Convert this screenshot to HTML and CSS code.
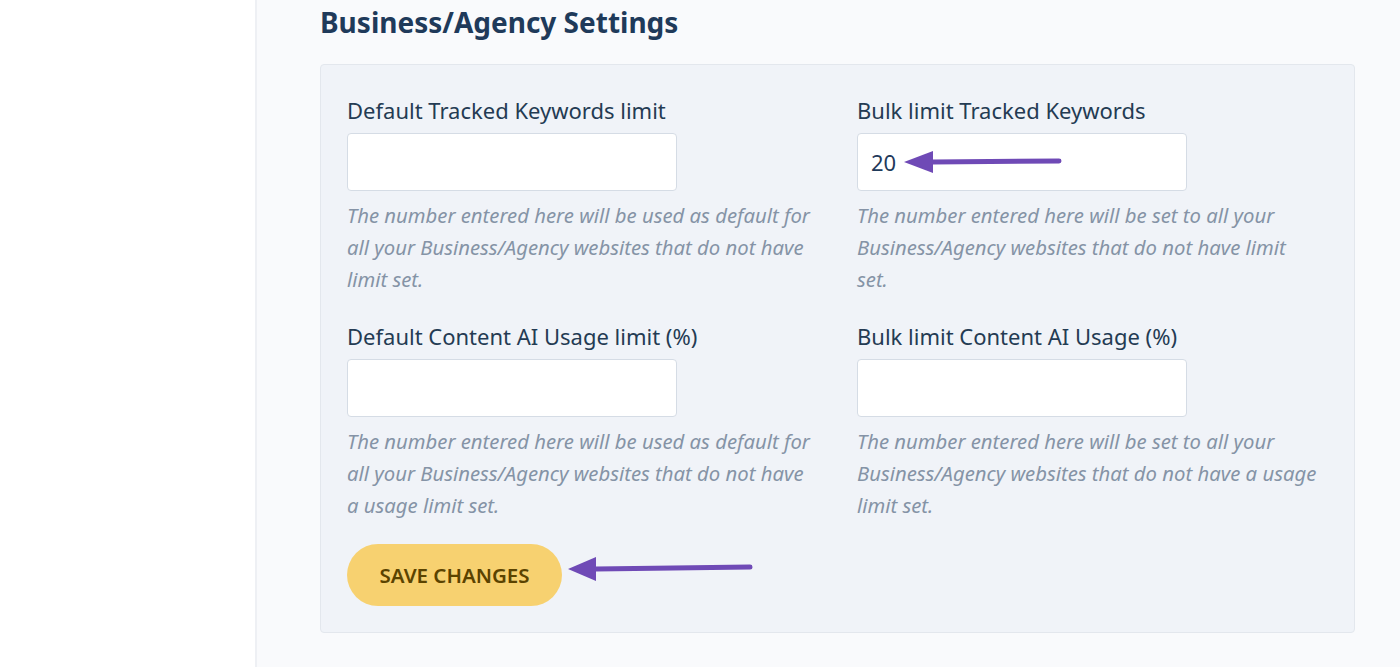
FILE: index.html
```html
<!DOCTYPE html>
<html lang="en">
<head>
  <meta charset="UTF-8" />
  <meta name="viewport" content="width=device-width, initial-scale=1.0" />
  <title>Business/Agency Settings</title>
  <link rel="stylesheet" href="styles.css">
</head>
<body>
  <div class="layout">
    <aside class="sidebar"></aside>

    <main class="content">
      <h2 class="title">Business/Agency Settings</h2>

      <form class="panel" onsubmit="return false">
        <div class="grid">
          <div class="field">
            <label for="defaultKeywords">Default Tracked Keywords limit</label>
            <input type="text" id="defaultKeywords" />
            <p class="help">The number entered here will be used as default for all your Business/Agency websites that do not have limit set.</p>
          </div>

          <div class="field">
            <label for="bulkKeywords">Bulk limit Tracked Keywords</label>
            <div class="input-wrap">
              <input type="text" id="bulkKeywords" value="20" />
              <svg class="arrow arrow-input" width="160" height="26" viewBox="0 0 160 26">
                <path d="M31 12 L157 11" stroke="#6f4ab6" stroke-width="5" stroke-linecap="round" />
                <path d="M2 12 L31 1 L31 23 Z" fill="#6f4ab6" />
              </svg>
            </div>
            <p class="help">The number entered here will be set to all your Business/Agency websites that do not have limit set.</p>
          </div>

          <div class="field">
            <label for="defaultAi">Default Content AI Usage limit (%)</label>
            <input type="text" id="defaultAi" />
            <p class="help">The number entered here will be used as default for all your Business/Agency websites that do not have a usage limit set.</p>
          </div>

          <div class="field">
            <label for="bulkAi">Bulk limit Content AI Usage (%)</label>
            <input type="text" id="bulkAi" />
            <p class="help">The number entered here will be set to all your Business/Agency websites that do not have a usage limit set.</p>
          </div>
        </div>

        <div class="actions">
          <button type="submit" class="btn-save">Save Changes</button>
          <svg class="arrow arrow-button" width="190" height="28" viewBox="0 0 190 28">
            <path d="M29 14 L183 12" stroke="#6f4ab6" stroke-width="5" stroke-linecap="round" />
            <path d="M1 14 L29 2 L29 26 Z" fill="#6f4ab6" />
          </svg>
        </div>
      </form>
    </main>
  </div>
</body>
</html>
```

FILE: styles.css
```css
* { box-sizing: border-box; }

body {
  margin: 0;
  font-family: "Noto Sans", "Open Sans", sans-serif;
  color: #243b53;
  background: #f9fafc;
}

.layout {
  display: flex;
  min-height: 667px;
}

.sidebar {
  width: 257px;
  flex-shrink: 0;
  background: #fff;
  border-right: 2px solid #eef0f4;
}

.content {
  flex: 1;
  padding: 4px 45px 30px 63px;
}

.title {
  margin: 0 0 24px;
  font-size: 28px;
  line-height: 36px;
  font-weight: 700;
  color: #1f3a5a;
}

.panel {
  background: #f0f3f8;
  border: 1px solid #e3e7ed;
  border-radius: 4px;
  padding: 30px 26px 26px;
}

.grid {
  display: grid;
  grid-template-columns: 470px 462px;
  column-gap: 40px;
  row-gap: 26px;
}

.field label {
  display: block;
  font-size: 22px;
  line-height: 30px;
  color: #243b53;
  margin-bottom: 8px;
}

.field input {
  display: block;
  width: 330px;
  height: 58px;
  padding: 0 13px;
  font-family: inherit;
  font-size: 22px;
  color: #1f3a5a;
  background: #fff;
  border: 1px solid #d5dce5;
  border-radius: 4px;
}

.input-wrap {
  position: relative;
}

.help {
  margin: 8px 0 0;
  font-size: 20.3px;
  line-height: 32px;
  font-style: italic;
  color: #8593a6;
}

.actions {
  position: relative;
  margin-top: 23px;
}

.btn-save {
  width: 215px;
  height: 62px;
  border: none;
  border-radius: 31px;
  background: #f7d170;
  color: #5b4300;
  font-family: inherit;
  font-size: 20.5px;
  font-weight: 600;
  text-transform: uppercase;
  cursor: pointer;
}

/* annotation arrows drawn over the form */
.arrow {
  position: absolute;
  pointer-events: none;
}

.arrow-input {
  left: 45px;
  top: 17px;
}

.arrow-button {
  left: 220px;
  top: 11px;
}
```
